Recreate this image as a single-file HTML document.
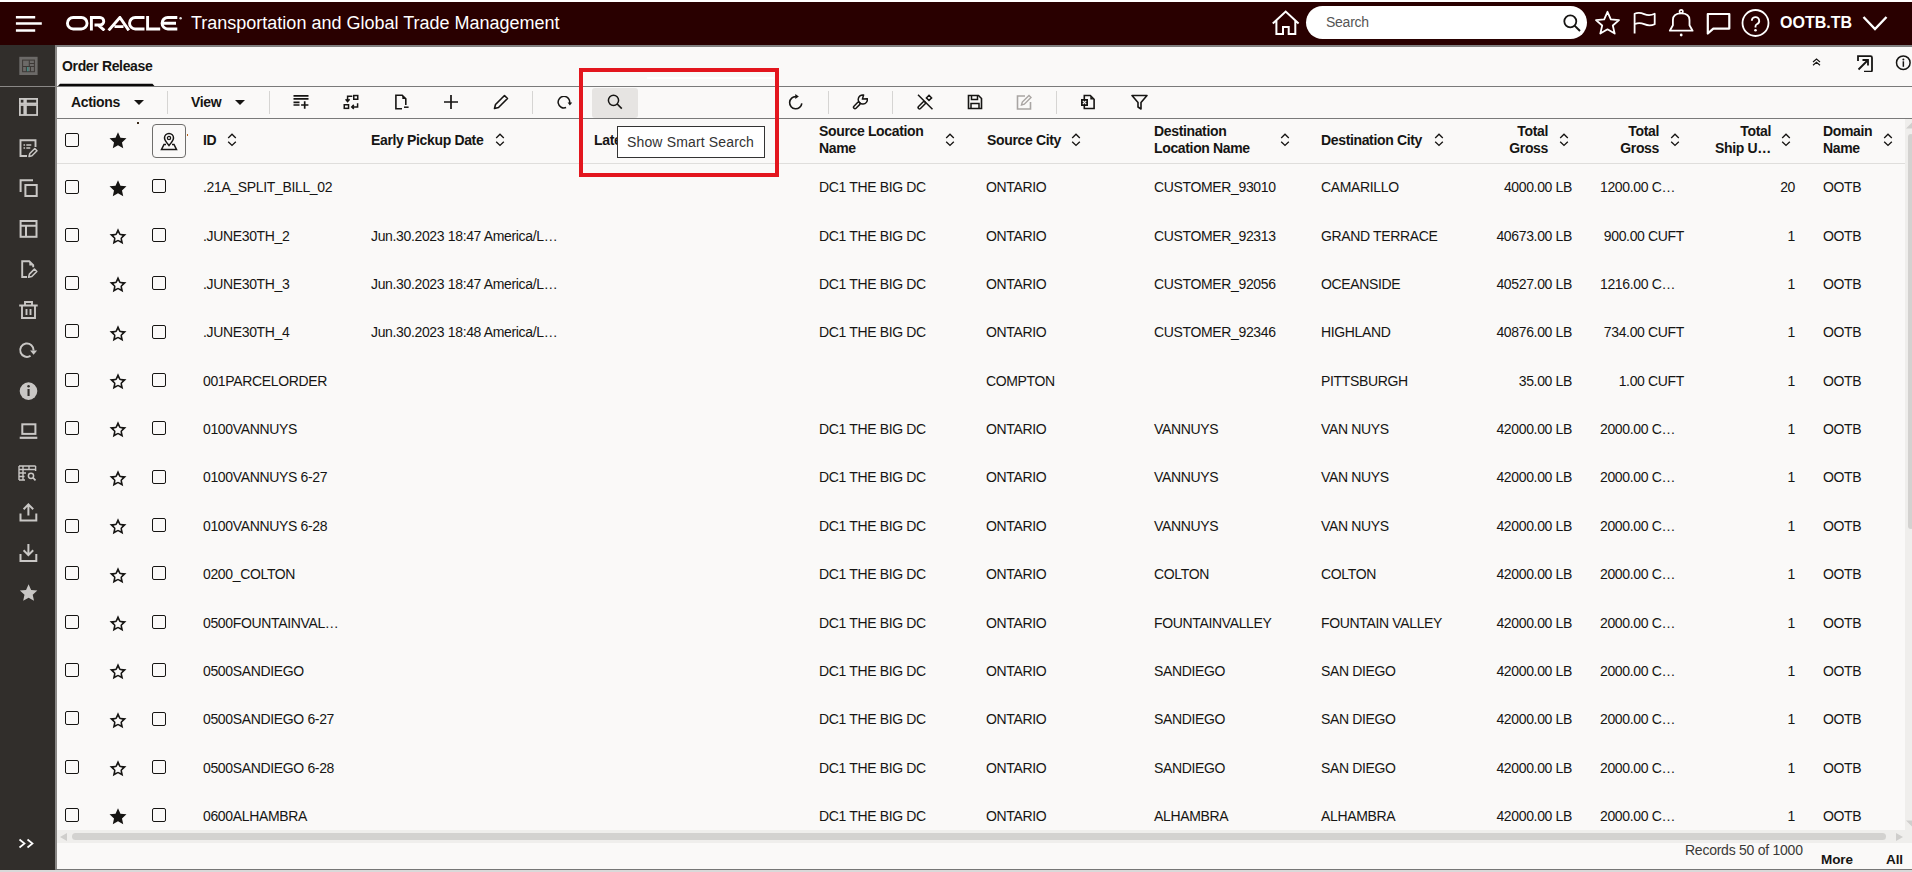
<!DOCTYPE html>
<html><head><meta charset="utf-8"><style>
*{box-sizing:border-box}
html,body{margin:0;padding:0;width:1912px;height:872px;overflow:hidden;background:#faf9f8;font-family:"Liberation Sans",sans-serif;color:#161513}
.a{position:absolute}
.t{position:absolute;white-space:nowrap;font-size:14px;letter-spacing:-0.35px;line-height:17px}
.b{font-weight:bold}
.cb{position:absolute;width:14px;height:14px;border:1.5px solid #161513;border-radius:2px}
svg{display:block}
.ic{position:absolute}
</style></head><body>

<div class="a" style="left:0;top:0;width:1912px;height:2px;background:#ffffff"></div>
<div class="a" style="left:0;top:2px;width:1912px;height:43px;background:#290000"></div>
<svg class="ic" style="left:0;top:0" width="50" height="45" viewBox="0 0 50 45"><path d="M15.9 17.2h19.3M15.9 23.6h25.9M15.9 30.4h19.3" stroke="#fff" stroke-width="2.5"/></svg>
<svg class="ic" style="left:66px;top:15.6px" width="120" height="15" viewBox="0 0 120 15">
<g fill="none" stroke="#fff" stroke-width="2.9">
<rect x="1.45" y="1.45" width="19.6" height="11.5" rx="5.75"/>
<path d="M25.4 14.4V1.45h8.6a3.75 3.75 0 0 1 0 7.5h-5.5M32 8.9l6.4 5.5"/>
<path d="M42.6 14.4L53.9 1.45 62.8 14.4M48.5 10.6h9"/>
<path d="M78.5 1.45h-9.2a5.75 5.75 0 0 0 0 11.5h9.2"/>
<path d="M81.6 0v12.95h12.6"/>
<path d="M111.3 1.45h-9.5a5.75 5.75 0 0 0 0 11.5h9.5M97.5 7.2h12.5"/>
</g><circle cx="114.6" cy="2.2" r="1.2" fill="#ddd"/></svg>
<div class="t" style="left:191px;top:13px;font-size:18px;letter-spacing:0;line-height:21px;color:#fff">Transportation and Global Trade Management</div>
<svg class="ic" style="left:1272px;top:10px" width="28" height="26" viewBox="0 0 28 26"><path d="M0.8 13.6L13.7 1.6 26.6 13.6M4.4 10.3V23.9H11V16.9h5.7v7h6.6V10.3" fill="none" stroke="#fff" stroke-width="2"/></svg>
<div class="a" style="left:1306px;top:6px;width:281px;height:33px;border-radius:17px;background:#fff"></div>
<div class="t" style="left:1326px;top:14px;color:#555;letter-spacing:-0.25px">Search</div>
<svg class="ic" style="left:1563px;top:14px" width="18" height="18" viewBox="0 0 18 18"><circle cx="7.3" cy="7.3" r="6" fill="none" stroke="#161513" stroke-width="1.8"/><path d="M11.6 11.6L17 17" stroke="#161513" stroke-width="2"/></svg>
<svg class="ic" style="left:1594px;top:10px" width="27" height="26" viewBox="0 0 27 26"><path d="M13.5 1.8l3.3 7.6 8.2.7-6.2 5.4 1.9 8.1-7.2-4.3-7.2 4.3 1.9-8.1L2 10.1l8.2-.7z" fill="none" stroke="#fff" stroke-width="1.8" stroke-linejoin="round"/></svg>
<svg class="ic" style="left:1632px;top:11px" width="25" height="24" viewBox="0 0 25 24"><path d="M2.6 22.6V2.8C6 1.3 9 1.8 12.2 3.1S18.6 4.6 22.7 2.8V13.2C18.6 15 15.4 14.5 12.2 13.2S6 11.7 2.6 13.2" fill="none" stroke="#fff" stroke-width="1.8" stroke-linejoin="round"/></svg>
<svg class="ic" style="left:1668px;top:8px" width="27" height="30" viewBox="0 0 27 30"><circle cx="13.2" cy="3.6" r="1.7" fill="none" stroke="#fff" stroke-width="1.6"/><path d="M1.8 22.7H24.6L21.5 17.3V12C21.5 7.8 18.2 5.4 13.2 5.4S4.9 7.8 4.9 12V17.3z" fill="none" stroke="#fff" stroke-width="1.8" stroke-linejoin="round"/><circle cx="13.2" cy="27" r="1.4" fill="#fff"/></svg>
<svg class="ic" style="left:1706px;top:12px" width="25" height="23" viewBox="0 0 25 23"><path d="M1.8 21.5V2h21.5v14.6H7.3z" fill="none" stroke="#fff" stroke-width="2.2" stroke-linejoin="round"/></svg>
<svg class="ic" style="left:1741px;top:8px" width="29" height="30" viewBox="0 0 29 30"><circle cx="14.5" cy="15" r="13" fill="none" stroke="#fff" stroke-width="1.8"/><path d="M10.8 12.75A3.7 3.7 0 1 1 15.77 16.23C15 16.6 14.5 17.3 14.5 18.3V19.6" fill="none" stroke="#fff" stroke-width="1.8"/><circle cx="14.5" cy="22.3" r="1.3" fill="#fff"/></svg>
<div class="t b" style="left:1780px;top:13px;font-size:16px;letter-spacing:0;line-height:19px;color:#fff">OOTB.TB</div>
<svg class="ic" style="left:1862px;top:15px" width="26" height="16" viewBox="0 0 26 16"><path d="M1.5 2l11.5 12L24.5 2" fill="none" stroke="#fff" stroke-width="2.4"/></svg>
<div class="a" style="left:0;top:45px;width:55px;height:827px;background:#312e2b"></div>
<div class="a" style="left:55px;top:45px;width:2px;height:827px;background:#8a8886"></div>
<div class="a" style="left:0;top:86px;width:55px;height:1px;background:#8a8886"></div>
<div class="a" style="left:55px;top:45px;width:1857px;height:2px;background:#7f7f7f"></div>
<div class="a" style="left:55px;top:868.6px;width:1857px;height:1.6px;background:#767676"></div>
<div class="a" style="left:0;top:870px;width:1912px;height:2px;background:#d9d9d9"></div>
<svg class="ic" style="left:0;top:0" width="55" height="872" viewBox="0 0 55 872"><rect x="19.3" y="56.8" width="18.3" height="18.2" fill="#6c6a68"/><rect x="22.6" y="60.1" width="11.8" height="11.6" fill="none" stroke="#3d3936" stroke-width="1"/><path d="M29.3 60.3v6.2M23 66.5h11.2M29.5 63.5h4.8M26.4 66.8v4.8M30.5 66.8v4.8" stroke="#3d3936" stroke-width="1"/><rect x="26.9" y="67" width="1.6" height="4.3" fill="#2aa198" opacity="0.55"/><g fill="none" stroke="#c9c7c5" stroke-width="1.8"><rect x="19.9" y="98.9" width="4.4" height="4.6"/><rect x="25.9" y="98.9" width="11.2" height="4.6"/><rect x="19.9" y="105" width="4.4" height="10"/><rect x="25.9" y="105" width="11.2" height="10"/></g><path d="M27 156H20.5V140.3h15V147" fill="none" stroke="#c9c7c5" stroke-width="1.9"/><path d="M23.5 145h1.6M26.3 145h5M23.5 148h1.6M26.3 148h4" stroke="#c9c7c5" stroke-width="1.5"/><path d="M29 156.5l.8-3 5-5 2.2 2.2-5 5z" fill="none" stroke="#c9c7c5" stroke-width="1.5" stroke-linejoin="round"/><path d="M20.6 192V180.2h12.4" fill="none" stroke="#c9c7c5" stroke-width="2"/><rect x="25.4" y="185" width="11.3" height="11" fill="none" stroke="#c9c7c5" stroke-width="2"/><rect x="20.6" y="221" width="15.9" height="15.8" fill="none" stroke="#c9c7c5" stroke-width="2"/><path d="M20.6 225.8h15.9M26 225.8v11" stroke="#c9c7c5" stroke-width="2"/><path d="M27 277H22.2V261.2h7l4 4v2" fill="none" stroke="#c9c7c5" stroke-width="1.9"/><path d="M29.3 261.5v4h3.6z" fill="#c9c7c5"/><path d="M28.6 277.3l.8-3.2 5-5 2.4 2.4-5 5z" fill="none" stroke="#c9c7c5" stroke-width="1.6" stroke-linejoin="round"/><path d="M19.2 305.5h18.5M25 305.5v-3.5h7v3.5M22 305.5v12.5h13v-12.5M26.5 309v6M30.5 309v6" fill="none" stroke="#c9c7c5" stroke-width="1.9"/><path d="M30.55 355.78A6.7 6.7 0 1 1 33.6 350.5" fill="none" stroke="#c9c7c5" stroke-width="2"/><path d="M30.1 350.4H37.1L33.6 354.8z" fill="#c9c7c5"/><circle cx="28.5" cy="391.1" r="8.8" fill="#c9c7c5"/><rect x="27.5" y="389" width="2.1" height="7" fill="#312e2b"/><circle cx="28.55" cy="386.2" r="1.25" fill="#312e2b"/><rect x="22.3" y="424.3" width="13.1" height="9.6" fill="none" stroke="#c9c7c5" stroke-width="2"/><path d="M19.7 437.8h17.6" stroke="#c9c7c5" stroke-width="2.2"/><path d="M19 466h16.6M19 469.5h16.6M19 473h7M19 476.5h5.5M19 480h6M19 466v14M23 466v14M29 466v3.5M35.6 466v5" fill="none" stroke="#c9c7c5" stroke-width="1.4"/><circle cx="31" cy="475.8" r="2.6" fill="none" stroke="#c9c7c5" stroke-width="1.5"/><path d="M32.9 477.7l2.6 2.6" stroke="#c9c7c5" stroke-width="1.7"/><path d="M28.4 515.5V504.5M23.6 509.2l4.8-4.8 4.8 4.8M20.5 513.5v7h15.8v-7" fill="none" stroke="#c9c7c5" stroke-width="2"/><path d="M28.4 544v11M23.6 550.3l4.8 4.8 4.8-4.8M20.5 554v7h15.8v-7" fill="none" stroke="#c9c7c5" stroke-width="2"/><path d="M28.60 584.20 L31.14 589.90 L37.35 590.56 L32.71 594.74 L34.01 600.84 L28.60 597.72 L23.19 600.84 L24.49 594.74 L19.85 590.56 L26.06 589.90Z" fill="#c9c7c5"/></svg>
<svg class="ic" style="left:18px;top:838px" width="17" height="11" viewBox="0 0 17 11"><path d="M1.5 1.5l5 4-5 4M9.5 1.5l5 4-5 4" fill="none" stroke="#fff" stroke-width="1.7"/></svg>
<div class="t b" style="left:62px;top:58px">Order Release</div>
<svg class="ic" style="left:57px;top:83px" width="100" height="4" viewBox="0 0 100 4"><path d="M0.8 3.2L3 0.8H95.5L97.7 3.2z" fill="#0a0908"/></svg>
<div class="a" style="left:57px;top:86px;width:1855px;height:1px;background:#7a7a7a"></div>
<svg class="ic" style="left:1812px;top:58px" width="9" height="8" viewBox="0 0 9 8"><path d="M1 4L4.5 1 8 4M1 7.3L4.5 4.3 8 7.3" fill="none" stroke="#161513" stroke-width="1.2"/></svg>
<svg class="ic" style="left:1856px;top:54px" width="18" height="18" viewBox="0 0 18 18"><path d="M2 7V2.2h12.5a1.5 1.5 0 0 1 1.5 1.5v12.5a1.5 1.5 0 0 1-1.5 1.5H8" fill="none" stroke="#161513" stroke-width="1.8"/><path d="M2.5 15.5L12 6M6.5 6H12v5.5" fill="none" stroke="#161513" stroke-width="1.8"/></svg>
<svg class="ic" style="left:1895px;top:55px" width="17" height="17" viewBox="0 0 17 17"><circle cx="8.3" cy="7.7" r="6.8" fill="none" stroke="#161513" stroke-width="1.5"/><rect x="7.6" y="6.3" width="1.5" height="5.5" fill="#161513"/><circle cx="8.35" cy="4.4" r="1" fill="#161513"/></svg>
<div class="t b" style="left:71px;top:94px">Actions</div>
<svg class="ic" style="left:134px;top:100px" width="10" height="5" viewBox="0 0 10 5"><path d="M0 0h10L5 5z" fill="#161513"/></svg>
<div class="a" style="left:167px;top:91px;width:1px;height:23px;background:#d6d5d3"></div>
<div class="t b" style="left:191px;top:94px">View</div>
<svg class="ic" style="left:235px;top:100px" width="10" height="5" viewBox="0 0 10 5"><path d="M0 0h10L5 5z" fill="#161513"/></svg>
<div class="a" style="left:269px;top:91px;width:1px;height:23px;background:#d6d5d3"></div>
<svg class="ic" style="left:293px;top:94px" width="16" height="16" viewBox="0 0 16 16"><path d="M0.5 1.8h15M0.5 4.9h15M0.5 8.3h6M0.5 11h6M11.7 7.3v7.4M8.1 11h7.3" fill="none" stroke="#161513" stroke-width="1.7"/></svg>
<svg class="ic" style="left:343px;top:94px" width="16" height="16" viewBox="0 0 16 16"><rect x="10.75" y="1.55" width="4" height="3.7" fill="none" stroke="#161513" stroke-width="1.5"/><rect x="1.25" y="10.75" width="4.3" height="3.6" fill="none" stroke="#161513" stroke-width="1.5"/><path d="M9.3 2.3H4.6v5M2.6 5.2l2 2.3 2-2.3" fill="none" stroke="#161513" stroke-width="1.5"/><path d="M14.6 9.3v3.6H8.8M10.8 10.9l-2 2 2 2" fill="none" stroke="#161513" stroke-width="1.5"/></svg>
<svg class="ic" style="left:394px;top:94px" width="16" height="16" viewBox="0 0 16 16"><path d="M8 14.8H1.9V1.2h6.3l3.6 3.7v6" fill="none" stroke="#161513" stroke-width="1.6"/><path d="M8.3 1.5v3.6h3.5z" fill="#161513"/><path d="M10 13.2h4.6" stroke="#161513" stroke-width="1.5"/></svg>
<svg class="ic" style="left:443px;top:94px" width="16" height="16" viewBox="0 0 16 16"><path d="M8 1v14M1 8h14" stroke="#161513" stroke-width="1.7"/></svg>
<svg class="ic" style="left:493px;top:94px" width="16" height="16" viewBox="0 0 16 16"><path d="M1.5 14.5l1-4L11.5 1.5l3 3-9 9z" fill="none" stroke="#161513" stroke-width="1.6" stroke-linejoin="round"/></svg>
<div class="a" style="left:532px;top:91px;width:1px;height:23px;background:#d6d5d3"></div>
<svg class="ic" style="left:557px;top:96px" width="16" height="14" viewBox="0 0 16 14"><path d="M9.08 11.55A5.8 5.8 0 1 1 12.6 7.4" fill="none" stroke="#161513" stroke-width="1.5"/><path d="M10.6 6.6h4.6l-2.3 3z" fill="#161513"/></svg>
<div class="a" style="left:592px;top:88px;width:46px;height:30px;background:#e6e4e2;border-radius:3px"></div>
<svg class="ic" style="left:607px;top:94px" width="16" height="16" viewBox="0 0 16 16"><circle cx="6.5" cy="6.3" r="5.1" fill="none" stroke="#161513" stroke-width="1.5"/><path d="M10.2 10L14.8 14.6" stroke="#161513" stroke-width="1.6"/></svg>
<svg class="ic" style="left:788px;top:94px" width="16" height="16" viewBox="0 0 16 16"><path d="M13.8 9.3A6.1 6.1 0 1 1 8 2.6" fill="none" stroke="#161513" stroke-width="1.6"/><path d="M7.3 0.1L10.8 2.5 7.3 4.9z" fill="#161513"/></svg>
<div class="a" style="left:828px;top:91px;width:1px;height:23px;background:#d6d5d3"></div>
<svg class="ic" style="left:852px;top:94px" width="16" height="16" viewBox="0 0 16 16"><path d="M3 13.2L6.6 9.6" stroke="#161513" stroke-width="4.4" stroke-linecap="round"/><path d="M3 13.2L6.6 9.6" stroke="#faf9f8" stroke-width="1.4" stroke-linecap="round"/><path d="M15.33 4.7A4.6 4.6 0 1 1 11.6 0.97L10.4 5.1z" fill="none" stroke="#161513" stroke-width="1.5" stroke-linejoin="round"/></svg>
<div class="a" style="left:892px;top:91px;width:1px;height:23px;background:#d6d5d3"></div>
<svg class="ic" style="left:917px;top:94px" width="17" height="16" viewBox="0 0 17 16"><path d="M2.5 13.5L7 9" stroke="#161513" stroke-width="4.2" stroke-linecap="round"/><path d="M2.5 13.5L7 9" stroke="#faf9f8" stroke-width="1.2" stroke-linecap="round"/><path d="M1 0.8L15.5 15.3" stroke="#161513" stroke-width="1.5"/><path d="M12 1.3l2.6 2.6-2.6 2.6-2.6-2.6z" fill="none" stroke="#161513" stroke-width="1.5"/></svg>
<svg class="ic" style="left:967px;top:94px" width="16" height="16" viewBox="0 0 16 16"><path d="M1.5 1.5h10l3 3v10h-13z" fill="none" stroke="#161513" stroke-width="1.6"/><path d="M4.5 1.5v4h6v-4M4 14.5v-5h8v5" fill="none" stroke="#161513" stroke-width="1.5"/></svg>
<svg class="ic" style="left:1016px;top:94px" width="17" height="16" viewBox="0 0 17 16"><path d="M9 2H1.5v13h13V8" fill="none" stroke="#a9a5a3" stroke-width="1.6"/><path d="M5.5 11l.8-3L13 1.5l2 2-6.7 6.7z" fill="none" stroke="#a9a5a3" stroke-width="1.4"/></svg>
<div class="a" style="left:1056px;top:91px;width:1px;height:23px;background:#d6d5d3"></div>
<svg class="ic" style="left:1080px;top:94px" width="16" height="16" viewBox="0 0 16 16"><path d="M4.3 5V1.5h6l3.8 3.8v9.2H4.3v-3" fill="none" stroke="#161513" stroke-width="1.6"/><path d="M10.3 2v3.5h3.5z" fill="#161513"/><rect x="1" y="5" width="7" height="7" fill="#161513"/><path d="M2.8 6.8l3.4 3.4M6.2 6.8l-3.4 3.4" stroke="#faf9f8" stroke-width="1.1"/></svg>
<svg class="ic" style="left:1131px;top:94px" width="17" height="16" viewBox="0 0 17 16"><path d="M1 1.5h15l-6 7v6.5l-3-2v-4.5z" fill="none" stroke="#161513" stroke-width="1.6" stroke-linejoin="round"/></svg>
<div class="a" style="left:57px;top:118px;width:1855px;height:1px;background:#7a7a7a"></div>
<div class="a" style="left:57px;top:163px;width:1848px;height:1px;background:#dfdedc"></div>
<div class="cb" style="left:65px;top:133px"></div>
<div class="ic" style="left:109.4px;top:132.2px"><svg width="18" height="18" viewBox="0 0 18 18"><path d="M9.00 0.20 L11.46 5.72 L17.46 6.35 L12.98 10.39 L14.23 16.30 L9.00 13.28 L3.77 16.30 L5.02 10.39 L0.54 6.35 L6.54 5.72Z" fill="#161513"/></svg></div>
<div class="a" style="left:152px;top:124px;width:34px;height:34px;border:1px solid #6f6e6c;border-radius:4px"></div>
<svg class="ic" style="left:160px;top:131.8px" width="18" height="19" viewBox="0 0 18 19"><path d="M9 13.5C5.5 9.5 4.5 7.8 4.5 6a4.5 4.5 0 0 1 9 0c0 1.8-1 3.5-4.5 7.5z" fill="none" stroke="#161513" stroke-width="1.5"/><circle cx="9" cy="6" r="1.6" fill="none" stroke="#161513" stroke-width="1.3"/><path d="M6 12.5H4L1.5 17.5h15L14 12.5h-2" fill="none" stroke="#161513" stroke-width="1.5"/></svg>
<div class="a" style="left:137px;top:122px;width:1.6px;height:1.6px;background:#3a2a1a"></div>
<div class="a" style="left:187px;top:134px;width:1.2px;height:2px;background:#b8661e"></div>
<div class="t b" style="left:203px;top:132px">ID</div>
<div class="ic" style="left:227px;top:133.3px"><svg width="10" height="15" viewBox="0 0 10 15"><path d="M1.2 5L5 1.3 8.8 5M1.2 8.7L5 12.4 8.8 8.7" fill="none" stroke="#161513" stroke-width="1.35"/></svg></div>
<div class="t b" style="left:371px;top:132px">Early Pickup Date</div>
<div class="ic" style="left:495px;top:133.3px"><svg width="10" height="15" viewBox="0 0 10 15"><path d="M1.2 5L5 1.3 8.8 5M1.2 8.7L5 12.4 8.8 8.7" fill="none" stroke="#161513" stroke-width="1.35"/></svg></div>
<div class="t b" style="left:594px;top:132px">Late</div>
<div class="t b" style="left:819px;top:123px">Source Location<br>Name</div>
<div class="ic" style="left:945px;top:133.3px"><svg width="10" height="15" viewBox="0 0 10 15"><path d="M1.2 5L5 1.3 8.8 5M1.2 8.7L5 12.4 8.8 8.7" fill="none" stroke="#161513" stroke-width="1.35"/></svg></div>
<div class="t b" style="left:987px;top:132px">Source City</div>
<div class="ic" style="left:1071px;top:133.3px"><svg width="10" height="15" viewBox="0 0 10 15"><path d="M1.2 5L5 1.3 8.8 5M1.2 8.7L5 12.4 8.8 8.7" fill="none" stroke="#161513" stroke-width="1.35"/></svg></div>
<div class="t b" style="left:1154px;top:123px">Destination<br>Location Name</div>
<div class="ic" style="left:1280px;top:133.3px"><svg width="10" height="15" viewBox="0 0 10 15"><path d="M1.2 5L5 1.3 8.8 5M1.2 8.7L5 12.4 8.8 8.7" fill="none" stroke="#161513" stroke-width="1.35"/></svg></div>
<div class="t b" style="left:1321px;top:132px">Destination City</div>
<div class="ic" style="left:1434px;top:133.3px"><svg width="10" height="15" viewBox="0 0 10 15"><path d="M1.2 5L5 1.3 8.8 5M1.2 8.7L5 12.4 8.8 8.7" fill="none" stroke="#161513" stroke-width="1.35"/></svg></div>
<div class="t b" style="right:364px;top:123px;text-align:right">Total<br>Gross</div>
<div class="ic" style="left:1559px;top:133.3px"><svg width="10" height="15" viewBox="0 0 10 15"><path d="M1.2 5L5 1.3 8.8 5M1.2 8.7L5 12.4 8.8 8.7" fill="none" stroke="#161513" stroke-width="1.35"/></svg></div>
<div class="t b" style="right:253px;top:123px;text-align:right">Total<br>Gross</div>
<div class="ic" style="left:1670px;top:133.3px"><svg width="10" height="15" viewBox="0 0 10 15"><path d="M1.2 5L5 1.3 8.8 5M1.2 8.7L5 12.4 8.8 8.7" fill="none" stroke="#161513" stroke-width="1.35"/></svg></div>
<div class="t b" style="right:141px;top:123px;text-align:right">Total<br>Ship U…</div>
<div class="ic" style="left:1781px;top:133.3px"><svg width="10" height="15" viewBox="0 0 10 15"><path d="M1.2 5L5 1.3 8.8 5M1.2 8.7L5 12.4 8.8 8.7" fill="none" stroke="#161513" stroke-width="1.35"/></svg></div>
<div class="t b" style="left:1823px;top:123px">Domain<br>Name</div>
<div class="ic" style="left:1883px;top:133.3px"><svg width="10" height="15" viewBox="0 0 10 15"><path d="M1.2 5L5 1.3 8.8 5M1.2 8.7L5 12.4 8.8 8.7" fill="none" stroke="#161513" stroke-width="1.35"/></svg></div>
<div class="cb" style="left:65px;top:180px"></div>
<div class="ic" style="left:109.4px;top:179.8px"><svg width="18" height="18" viewBox="0 0 18 18"><path d="M9.00 0.20 L11.46 5.72 L17.46 6.35 L12.98 10.39 L14.23 16.30 L9.00 13.28 L3.77 16.30 L5.02 10.39 L0.54 6.35 L6.54 5.72Z" fill="#161513"/></svg></div>
<div class="cb" style="left:152px;top:179px"></div>
<div class="t" style="left:203px;top:179px">.21A_SPLIT_BILL_02</div>
<div class="t" style="left:819px;top:179px">DC1 THE BIG DC</div>
<div class="t" style="left:986px;top:179px">ONTARIO</div>
<div class="t" style="left:1154px;top:179px">CUSTOMER_93010</div>
<div class="t" style="left:1321px;top:179px">CAMARILLO</div>
<div class="t" style="right:340px;top:179px">4000.00 LB</div>
<div class="t" style="left:1600px;top:179px">1200.00 C…</div>
<div class="t" style="right:117px;top:179px">20</div>
<div class="t" style="left:1823px;top:179px">OOTB</div>
<div class="cb" style="left:65px;top:228px"></div>
<div class="ic" style="left:109.4px;top:227.8px"><svg width="18" height="18" viewBox="0 0 18 18"><path d="M9.00 0.20 L11.46 5.72 L17.46 6.35 L12.98 10.39 L14.23 16.30 L9.00 13.28 L3.77 16.30 L5.02 10.39 L0.54 6.35 L6.54 5.72Z M9.00 4.41 L10.51 7.02 L13.46 7.65 L11.45 9.90 L11.76 12.90 L9.00 11.68 L6.24 12.90 L6.55 9.90 L4.54 7.65 L7.49 7.02Z" fill="#161513" fill-rule="evenodd"/></svg></div>
<div class="cb" style="left:152px;top:228px"></div>
<div class="t" style="left:203px;top:228px">.JUNE30TH_2</div>
<div class="t" style="left:371px;top:228px">Jun.30.2023 18:47 America/L…</div>
<div class="t" style="left:819px;top:228px">DC1 THE BIG DC</div>
<div class="t" style="left:986px;top:228px">ONTARIO</div>
<div class="t" style="left:1154px;top:228px">CUSTOMER_92313</div>
<div class="t" style="left:1321px;top:228px">GRAND TERRACE</div>
<div class="t" style="right:340px;top:228px">40673.00 LB</div>
<div class="t" style="right:228px;top:228px">900.00 CUFT</div>
<div class="t" style="right:117px;top:228px">1</div>
<div class="t" style="left:1823px;top:228px">OOTB</div>
<div class="cb" style="left:65px;top:276px"></div>
<div class="ic" style="left:109.4px;top:275.8px"><svg width="18" height="18" viewBox="0 0 18 18"><path d="M9.00 0.20 L11.46 5.72 L17.46 6.35 L12.98 10.39 L14.23 16.30 L9.00 13.28 L3.77 16.30 L5.02 10.39 L0.54 6.35 L6.54 5.72Z M9.00 4.41 L10.51 7.02 L13.46 7.65 L11.45 9.90 L11.76 12.90 L9.00 11.68 L6.24 12.90 L6.55 9.90 L4.54 7.65 L7.49 7.02Z" fill="#161513" fill-rule="evenodd"/></svg></div>
<div class="cb" style="left:152px;top:276px"></div>
<div class="t" style="left:203px;top:276px">.JUNE30TH_3</div>
<div class="t" style="left:371px;top:276px">Jun.30.2023 18:47 America/L…</div>
<div class="t" style="left:819px;top:276px">DC1 THE BIG DC</div>
<div class="t" style="left:986px;top:276px">ONTARIO</div>
<div class="t" style="left:1154px;top:276px">CUSTOMER_92056</div>
<div class="t" style="left:1321px;top:276px">OCEANSIDE</div>
<div class="t" style="right:340px;top:276px">40527.00 LB</div>
<div class="t" style="left:1600px;top:276px">1216.00 C…</div>
<div class="t" style="right:117px;top:276px">1</div>
<div class="t" style="left:1823px;top:276px">OOTB</div>
<div class="cb" style="left:65px;top:324px"></div>
<div class="ic" style="left:109.4px;top:324.8px"><svg width="18" height="18" viewBox="0 0 18 18"><path d="M9.00 0.20 L11.46 5.72 L17.46 6.35 L12.98 10.39 L14.23 16.30 L9.00 13.28 L3.77 16.30 L5.02 10.39 L0.54 6.35 L6.54 5.72Z M9.00 4.41 L10.51 7.02 L13.46 7.65 L11.45 9.90 L11.76 12.90 L9.00 11.68 L6.24 12.90 L6.55 9.90 L4.54 7.65 L7.49 7.02Z" fill="#161513" fill-rule="evenodd"/></svg></div>
<div class="cb" style="left:152px;top:325px"></div>
<div class="t" style="left:203px;top:324px">.JUNE30TH_4</div>
<div class="t" style="left:371px;top:324px">Jun.30.2023 18:48 America/L…</div>
<div class="t" style="left:819px;top:324px">DC1 THE BIG DC</div>
<div class="t" style="left:986px;top:324px">ONTARIO</div>
<div class="t" style="left:1154px;top:324px">CUSTOMER_92346</div>
<div class="t" style="left:1321px;top:324px">HIGHLAND</div>
<div class="t" style="right:340px;top:324px">40876.00 LB</div>
<div class="t" style="right:228px;top:324px">734.00 CUFT</div>
<div class="t" style="right:117px;top:324px">1</div>
<div class="t" style="left:1823px;top:324px">OOTB</div>
<div class="cb" style="left:65px;top:373px"></div>
<div class="ic" style="left:109.4px;top:372.8px"><svg width="18" height="18" viewBox="0 0 18 18"><path d="M9.00 0.20 L11.46 5.72 L17.46 6.35 L12.98 10.39 L14.23 16.30 L9.00 13.28 L3.77 16.30 L5.02 10.39 L0.54 6.35 L6.54 5.72Z M9.00 4.41 L10.51 7.02 L13.46 7.65 L11.45 9.90 L11.76 12.90 L9.00 11.68 L6.24 12.90 L6.55 9.90 L4.54 7.65 L7.49 7.02Z" fill="#161513" fill-rule="evenodd"/></svg></div>
<div class="cb" style="left:152px;top:373px"></div>
<div class="t" style="left:203px;top:373px">001PARCELORDER</div>
<div class="t" style="left:986px;top:373px">COMPTON</div>
<div class="t" style="left:1321px;top:373px">PITTSBURGH</div>
<div class="t" style="right:340px;top:373px">35.00 LB</div>
<div class="t" style="right:228px;top:373px">1.00 CUFT</div>
<div class="t" style="right:117px;top:373px">1</div>
<div class="t" style="left:1823px;top:373px">OOTB</div>
<div class="cb" style="left:65px;top:421px"></div>
<div class="ic" style="left:109.4px;top:420.8px"><svg width="18" height="18" viewBox="0 0 18 18"><path d="M9.00 0.20 L11.46 5.72 L17.46 6.35 L12.98 10.39 L14.23 16.30 L9.00 13.28 L3.77 16.30 L5.02 10.39 L0.54 6.35 L6.54 5.72Z M9.00 4.41 L10.51 7.02 L13.46 7.65 L11.45 9.90 L11.76 12.90 L9.00 11.68 L6.24 12.90 L6.55 9.90 L4.54 7.65 L7.49 7.02Z" fill="#161513" fill-rule="evenodd"/></svg></div>
<div class="cb" style="left:152px;top:421px"></div>
<div class="t" style="left:203px;top:421px">0100VANNUYS</div>
<div class="t" style="left:819px;top:421px">DC1 THE BIG DC</div>
<div class="t" style="left:986px;top:421px">ONTARIO</div>
<div class="t" style="left:1154px;top:421px">VANNUYS</div>
<div class="t" style="left:1321px;top:421px">VAN NUYS</div>
<div class="t" style="right:340px;top:421px">42000.00 LB</div>
<div class="t" style="left:1600px;top:421px">2000.00 C…</div>
<div class="t" style="right:117px;top:421px">1</div>
<div class="t" style="left:1823px;top:421px">OOTB</div>
<div class="cb" style="left:65px;top:469px"></div>
<div class="ic" style="left:109.4px;top:469.8px"><svg width="18" height="18" viewBox="0 0 18 18"><path d="M9.00 0.20 L11.46 5.72 L17.46 6.35 L12.98 10.39 L14.23 16.30 L9.00 13.28 L3.77 16.30 L5.02 10.39 L0.54 6.35 L6.54 5.72Z M9.00 4.41 L10.51 7.02 L13.46 7.65 L11.45 9.90 L11.76 12.90 L9.00 11.68 L6.24 12.90 L6.55 9.90 L4.54 7.65 L7.49 7.02Z" fill="#161513" fill-rule="evenodd"/></svg></div>
<div class="cb" style="left:152px;top:470px"></div>
<div class="t" style="left:203px;top:469px">0100VANNUYS 6-27</div>
<div class="t" style="left:819px;top:469px">DC1 THE BIG DC</div>
<div class="t" style="left:986px;top:469px">ONTARIO</div>
<div class="t" style="left:1154px;top:469px">VANNUYS</div>
<div class="t" style="left:1321px;top:469px">VAN NUYS</div>
<div class="t" style="right:340px;top:469px">42000.00 LB</div>
<div class="t" style="left:1600px;top:469px">2000.00 C…</div>
<div class="t" style="right:117px;top:469px">1</div>
<div class="t" style="left:1823px;top:469px">OOTB</div>
<div class="cb" style="left:65px;top:519px"></div>
<div class="ic" style="left:109.4px;top:517.8px"><svg width="18" height="18" viewBox="0 0 18 18"><path d="M9.00 0.20 L11.46 5.72 L17.46 6.35 L12.98 10.39 L14.23 16.30 L9.00 13.28 L3.77 16.30 L5.02 10.39 L0.54 6.35 L6.54 5.72Z M9.00 4.41 L10.51 7.02 L13.46 7.65 L11.45 9.90 L11.76 12.90 L9.00 11.68 L6.24 12.90 L6.55 9.90 L4.54 7.65 L7.49 7.02Z" fill="#161513" fill-rule="evenodd"/></svg></div>
<div class="cb" style="left:152px;top:518px"></div>
<div class="t" style="left:203px;top:518px">0100VANNUYS 6-28</div>
<div class="t" style="left:819px;top:518px">DC1 THE BIG DC</div>
<div class="t" style="left:986px;top:518px">ONTARIO</div>
<div class="t" style="left:1154px;top:518px">VANNUYS</div>
<div class="t" style="left:1321px;top:518px">VAN NUYS</div>
<div class="t" style="right:340px;top:518px">42000.00 LB</div>
<div class="t" style="left:1600px;top:518px">2000.00 C…</div>
<div class="t" style="right:117px;top:518px">1</div>
<div class="t" style="left:1823px;top:518px">OOTB</div>
<div class="cb" style="left:65px;top:566px"></div>
<div class="ic" style="left:109.4px;top:566.8px"><svg width="18" height="18" viewBox="0 0 18 18"><path d="M9.00 0.20 L11.46 5.72 L17.46 6.35 L12.98 10.39 L14.23 16.30 L9.00 13.28 L3.77 16.30 L5.02 10.39 L0.54 6.35 L6.54 5.72Z M9.00 4.41 L10.51 7.02 L13.46 7.65 L11.45 9.90 L11.76 12.90 L9.00 11.68 L6.24 12.90 L6.55 9.90 L4.54 7.65 L7.49 7.02Z" fill="#161513" fill-rule="evenodd"/></svg></div>
<div class="cb" style="left:152px;top:566px"></div>
<div class="t" style="left:203px;top:566px">0200_COLTON</div>
<div class="t" style="left:819px;top:566px">DC1 THE BIG DC</div>
<div class="t" style="left:986px;top:566px">ONTARIO</div>
<div class="t" style="left:1154px;top:566px">COLTON</div>
<div class="t" style="left:1321px;top:566px">COLTON</div>
<div class="t" style="right:340px;top:566px">42000.00 LB</div>
<div class="t" style="left:1600px;top:566px">2000.00 C…</div>
<div class="t" style="right:117px;top:566px">1</div>
<div class="t" style="left:1823px;top:566px">OOTB</div>
<div class="cb" style="left:65px;top:615px"></div>
<div class="ic" style="left:109.4px;top:614.8px"><svg width="18" height="18" viewBox="0 0 18 18"><path d="M9.00 0.20 L11.46 5.72 L17.46 6.35 L12.98 10.39 L14.23 16.30 L9.00 13.28 L3.77 16.30 L5.02 10.39 L0.54 6.35 L6.54 5.72Z M9.00 4.41 L10.51 7.02 L13.46 7.65 L11.45 9.90 L11.76 12.90 L9.00 11.68 L6.24 12.90 L6.55 9.90 L4.54 7.65 L7.49 7.02Z" fill="#161513" fill-rule="evenodd"/></svg></div>
<div class="cb" style="left:152px;top:615px"></div>
<div class="t" style="left:203px;top:615px">0500FOUNTAINVAL…</div>
<div class="t" style="left:819px;top:615px">DC1 THE BIG DC</div>
<div class="t" style="left:986px;top:615px">ONTARIO</div>
<div class="t" style="left:1154px;top:615px">FOUNTAINVALLEY</div>
<div class="t" style="left:1321px;top:615px">FOUNTAIN VALLEY</div>
<div class="t" style="right:340px;top:615px">42000.00 LB</div>
<div class="t" style="left:1600px;top:615px">2000.00 C…</div>
<div class="t" style="right:117px;top:615px">1</div>
<div class="t" style="left:1823px;top:615px">OOTB</div>
<div class="cb" style="left:65px;top:663px"></div>
<div class="ic" style="left:109.4px;top:662.8px"><svg width="18" height="18" viewBox="0 0 18 18"><path d="M9.00 0.20 L11.46 5.72 L17.46 6.35 L12.98 10.39 L14.23 16.30 L9.00 13.28 L3.77 16.30 L5.02 10.39 L0.54 6.35 L6.54 5.72Z M9.00 4.41 L10.51 7.02 L13.46 7.65 L11.45 9.90 L11.76 12.90 L9.00 11.68 L6.24 12.90 L6.55 9.90 L4.54 7.65 L7.49 7.02Z" fill="#161513" fill-rule="evenodd"/></svg></div>
<div class="cb" style="left:152px;top:663px"></div>
<div class="t" style="left:203px;top:663px">0500SANDIEGO</div>
<div class="t" style="left:819px;top:663px">DC1 THE BIG DC</div>
<div class="t" style="left:986px;top:663px">ONTARIO</div>
<div class="t" style="left:1154px;top:663px">SANDIEGO</div>
<div class="t" style="left:1321px;top:663px">SAN DIEGO</div>
<div class="t" style="right:340px;top:663px">42000.00 LB</div>
<div class="t" style="left:1600px;top:663px">2000.00 C…</div>
<div class="t" style="right:117px;top:663px">1</div>
<div class="t" style="left:1823px;top:663px">OOTB</div>
<div class="cb" style="left:65px;top:711px"></div>
<div class="ic" style="left:109.4px;top:711.8px"><svg width="18" height="18" viewBox="0 0 18 18"><path d="M9.00 0.20 L11.46 5.72 L17.46 6.35 L12.98 10.39 L14.23 16.30 L9.00 13.28 L3.77 16.30 L5.02 10.39 L0.54 6.35 L6.54 5.72Z M9.00 4.41 L10.51 7.02 L13.46 7.65 L11.45 9.90 L11.76 12.90 L9.00 11.68 L6.24 12.90 L6.55 9.90 L4.54 7.65 L7.49 7.02Z" fill="#161513" fill-rule="evenodd"/></svg></div>
<div class="cb" style="left:152px;top:712px"></div>
<div class="t" style="left:203px;top:711px">0500SANDIEGO 6-27</div>
<div class="t" style="left:819px;top:711px">DC1 THE BIG DC</div>
<div class="t" style="left:986px;top:711px">ONTARIO</div>
<div class="t" style="left:1154px;top:711px">SANDIEGO</div>
<div class="t" style="left:1321px;top:711px">SAN DIEGO</div>
<div class="t" style="right:340px;top:711px">42000.00 LB</div>
<div class="t" style="left:1600px;top:711px">2000.00 C…</div>
<div class="t" style="right:117px;top:711px">1</div>
<div class="t" style="left:1823px;top:711px">OOTB</div>
<div class="cb" style="left:65px;top:760px"></div>
<div class="ic" style="left:109.4px;top:759.8px"><svg width="18" height="18" viewBox="0 0 18 18"><path d="M9.00 0.20 L11.46 5.72 L17.46 6.35 L12.98 10.39 L14.23 16.30 L9.00 13.28 L3.77 16.30 L5.02 10.39 L0.54 6.35 L6.54 5.72Z M9.00 4.41 L10.51 7.02 L13.46 7.65 L11.45 9.90 L11.76 12.90 L9.00 11.68 L6.24 12.90 L6.55 9.90 L4.54 7.65 L7.49 7.02Z" fill="#161513" fill-rule="evenodd"/></svg></div>
<div class="cb" style="left:152px;top:760px"></div>
<div class="t" style="left:203px;top:760px">0500SANDIEGO 6-28</div>
<div class="t" style="left:819px;top:760px">DC1 THE BIG DC</div>
<div class="t" style="left:986px;top:760px">ONTARIO</div>
<div class="t" style="left:1154px;top:760px">SANDIEGO</div>
<div class="t" style="left:1321px;top:760px">SAN DIEGO</div>
<div class="t" style="right:340px;top:760px">42000.00 LB</div>
<div class="t" style="left:1600px;top:760px">2000.00 C…</div>
<div class="t" style="right:117px;top:760px">1</div>
<div class="t" style="left:1823px;top:760px">OOTB</div>
<div class="cb" style="left:65px;top:808px"></div>
<div class="ic" style="left:109.4px;top:807.8px"><svg width="18" height="18" viewBox="0 0 18 18"><path d="M9.00 0.20 L11.46 5.72 L17.46 6.35 L12.98 10.39 L14.23 16.30 L9.00 13.28 L3.77 16.30 L5.02 10.39 L0.54 6.35 L6.54 5.72Z" fill="#161513"/></svg></div>
<div class="cb" style="left:152px;top:808px"></div>
<div class="t" style="left:203px;top:808px">0600ALHAMBRA</div>
<div class="t" style="left:819px;top:808px">DC1 THE BIG DC</div>
<div class="t" style="left:986px;top:808px">ONTARIO</div>
<div class="t" style="left:1154px;top:808px">ALHAMBRA</div>
<div class="t" style="left:1321px;top:808px">ALHAMBRA</div>
<div class="t" style="right:340px;top:808px">42000.00 LB</div>
<div class="t" style="left:1600px;top:808px">2000.00 C…</div>
<div class="t" style="right:117px;top:808px">1</div>
<div class="t" style="left:1823px;top:808px">OOTB</div>
<div class="a" style="left:57px;top:830px;width:1855px;height:13px;background:#efeeec"></div>
<svg class="ic" style="left:60px;top:833px" width="7" height="8" viewBox="0 0 7 8"><path d="M7 0v8L0 4z" fill="#cfcecc"/></svg>
<div class="a" style="left:72px;top:833px;width:1814px;height:7px;background:#d3d2d0;border-radius:4px"></div>
<svg class="ic" style="left:1896px;top:833px" width="7" height="8" viewBox="0 0 7 8"><path d="M0 0v8l7-4z" fill="#cfcecc"/></svg>
<div class="a" style="left:1905px;top:119px;width:7px;height:711px;background:#efeeec"></div>
<div class="a" style="left:1908px;top:134px;width:6px;height:395px;background:#d3d2d0;border-radius:3px"></div>
<svg class="ic" style="left:1906px;top:122px" width="6" height="7" viewBox="0 0 6 7"><path d="M0 6.5L6 0.5V6.5z" fill="#d0cfcd"/></svg>
<svg class="ic" style="left:1906px;top:820px" width="6" height="7" viewBox="0 0 6 7"><path d="M0 0.5L6 6.5V0.5z" fill="#d0cfcd"/></svg>
<div class="t" style="left:1685px;top:842px;letter-spacing:-0.25px;color:#3a3937">Records 50 of 1000</div>
<div class="t b" style="left:1821px;top:851px;font-size:13.5px;letter-spacing:-0.1px">More</div>
<div class="t b" style="left:1886px;top:851px;font-size:13.5px;letter-spacing:-0.1px">All</div>
<div class="a" style="left:617px;top:126px;width:148px;height:32px;background:#fff;border:1.5px solid #333"></div>
<div class="t" style="left:627px;top:134px;letter-spacing:0.15px;color:#333;font-size:14px">Show Smart Search</div>
<div class="a" style="left:647px;top:77px;width:127px;height:1.5px;background:#fff"></div>
<div class="a" style="left:579px;top:68px;width:200px;height:109px;border:4px solid #e3161e"></div>
</body></html>
